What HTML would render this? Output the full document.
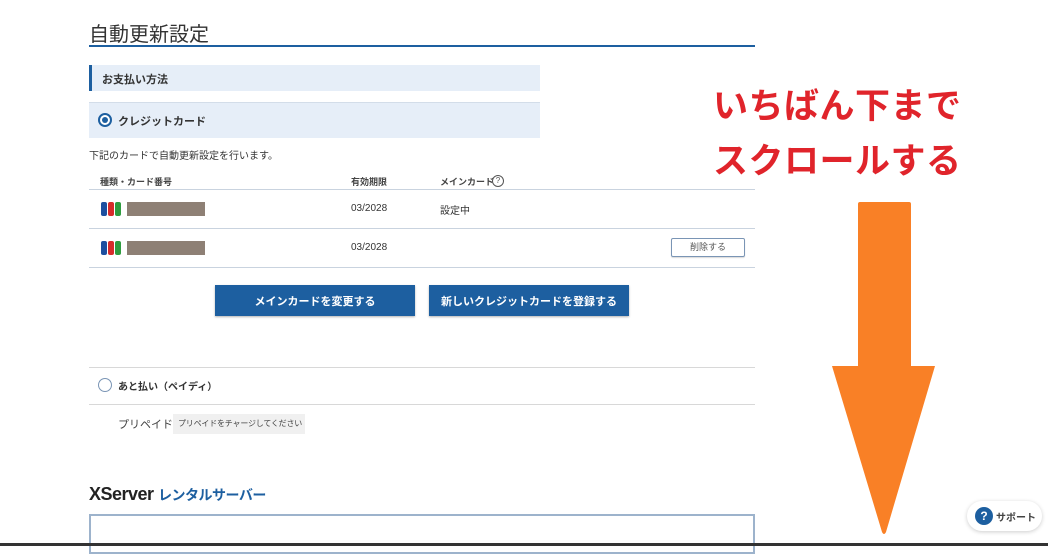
<!DOCTYPE html>
<html><head><meta charset="utf-8"><style>
*{margin:0;padding:0;box-sizing:border-box}
body{width:1048px;height:546px;overflow:hidden;background:#fff;position:relative;font-family:"Liberation Sans","Noto Sans CJK JP",sans-serif;color:#333}
.a{position:absolute;white-space:nowrap}
.hl{position:absolute;height:1px;background:#c9d3df}
.btn{position:absolute;background:#1d5fa0;color:#fff;font-size:11px;font-weight:bold;display:flex;align-items:center;justify-content:center;box-shadow:0 1px 2px rgba(0,0,0,.3)}
.jcb{position:absolute;width:20px;height:14px;display:flex;gap:1px}
.jcb span{flex:1;border-radius:2px}
.red{position:absolute;width:78px;height:14px;background:#8e8075}
</style></head><body>
<div class="a" style="left:89px;top:18px;font-size:20px;color:#333">自動更新設定</div>
<div style="position:absolute;left:89px;top:45px;width:666px;height:2px;background:#1d5fa0"></div>

<div style="position:absolute;left:89px;top:65px;width:451px;height:26px;background:#e6eef8;border-left:3px solid #1d5fa0"></div>
<div class="a" style="left:102px;top:71px;font-size:11px;font-weight:bold">お支払い方法</div>

<div style="position:absolute;left:89px;top:102px;width:451px;height:36px;background:#e6eef8;border-top:1px solid #d3dde9"></div>
<div style="position:absolute;left:98px;top:113px;width:14px;height:14px;border:2px solid #1d5fa0;border-radius:50%;background:#fff"></div>
<div style="position:absolute;left:102px;top:117px;width:6px;height:6px;border-radius:50%;background:#1d5fa0"></div>
<div class="a" style="left:118px;top:113px;font-size:11px;font-weight:bold">クレジットカード</div>

<div class="a" style="left:89px;top:147px;font-size:10px">下記のカードで自動更新設定を行います。</div>
<div class="a" style="left:100px;top:175px;font-size:9px;font-weight:bold;color:#444">種類・カード番号</div>
<div class="a" style="left:351px;top:175px;font-size:9px;font-weight:bold;color:#444">有効期限</div>
<div class="a" style="left:440px;top:175px;font-size:9px;font-weight:bold;color:#444">メインカード</div>
<div style="position:absolute;left:492px;top:175px;width:12px;height:12px;border:1px solid #555;border-radius:50%;font-size:8px;text-align:center;line-height:10px;color:#555">?</div>
<div class="hl" style="left:89px;top:189px;width:666px"></div>
<div class="jcb" style="left:101px;top:202px"><span style="background:#1d4f9f"></span><span style="background:#d62b2b"></span><span style="background:#2e9c3f"></span></div>
<div class="red" style="left:127px;top:202px"></div>
<div class="a" style="left:351px;top:203px;font-size:10px">03/2028</div>
<div class="a" style="left:440px;top:202px;font-size:10px">設定中</div>
<div class="hl" style="left:89px;top:228px;width:666px"></div>
<div class="jcb" style="left:101px;top:241px"><span style="background:#1d4f9f"></span><span style="background:#d62b2b"></span><span style="background:#2e9c3f"></span></div>
<div class="red" style="left:127px;top:241px"></div>
<div class="a" style="left:351px;top:242px;font-size:10px">03/2028</div>
<div style="position:absolute;left:671px;top:238px;width:74px;height:19px;border:1px solid #7a95b5;border-radius:2px;font-size:9px;color:#555;text-align:center;line-height:17px;box-shadow:0 1px 1px rgba(0,0,0,.15)">削除する</div>
<div class="hl" style="left:89px;top:267px;width:666px"></div>

<div class="btn" style="left:215px;top:285px;width:200px;height:31px">メインカードを変更する</div>
<div class="btn" style="left:429px;top:285px;width:200px;height:31px">新しいクレジットカードを登録する</div>

<div class="hl" style="left:89px;top:367px;width:666px;background:#d8d8d8"></div>
<div style="position:absolute;left:98px;top:378px;width:14px;height:14px;border:1px solid #7a95b5;border-radius:50%"></div>
<div class="a" style="left:118px;top:378px;font-size:10px;font-weight:bold">あと払い（ペイディ）</div>
<div class="hl" style="left:89px;top:404px;width:666px;background:#d8d8d8"></div>
<div class="a" style="left:118px;top:416px;font-size:11px;color:#444">プリペイド</div>
<div class="a" style="left:173px;top:414px;width:132px;height:20px;background:#f0f0f0;font-size:8px;line-height:20px;padding-left:5px;color:#444;overflow:hidden;letter-spacing:-0.2px">プリペイドをチャージしてください</div>

<div class="a" style="left:89px;top:484px;font-size:18px;font-weight:bold;color:#222;letter-spacing:-0.5px">XServer <span style="font-size:14px;color:#1d5fa0">レンタルサーバー</span></div>
<div style="position:absolute;left:89px;top:514px;width:666px;height:40px;border:2px solid #9db3cc"></div>
<div style="position:absolute;left:0;top:543px;width:1048px;height:3px;background:#333"></div>

<div class="a" style="left:713px;top:78px;font-size:35px;font-weight:bold;color:#e0242b;letter-spacing:0.5px">いちばん下まで</div>
<div class="a" style="left:713px;top:133px;font-size:35px;font-weight:bold;color:#e0242b;letter-spacing:0.5px">スクロールする</div>

<svg style="position:absolute;left:0;top:0" width="1048" height="546">
<path d="M858 204 Q858 202 860 202 L909 202 Q911 202 911 204 L911 366 L935 366 L886 532 Q884 536 882 532 L832 366 L858 366 Z" fill="#f98026"/>
</svg>

<div style="position:absolute;left:967px;top:501px;width:75px;height:30px;border-radius:15px;background:#fff;box-shadow:0 1px 4px rgba(0,0,0,.2)"></div>
<div style="position:absolute;left:975px;top:507px;width:18px;height:18px;border-radius:50%;background:#1d5fa0;color:#fff;font-size:12px;font-weight:bold;text-align:center;line-height:18px">?</div>
<div class="a" style="left:996px;top:509px;font-size:10px;font-weight:bold;color:#444">サポート</div>
</body></html>
